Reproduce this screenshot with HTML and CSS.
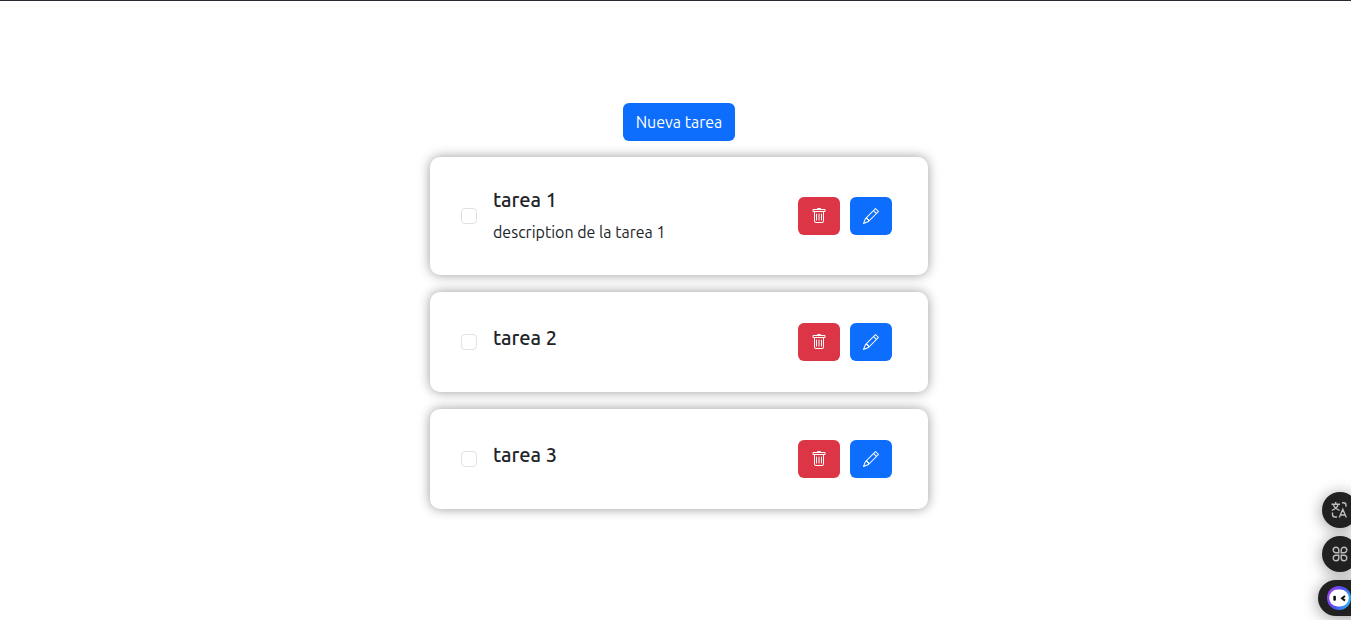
FILE: index.html
```html
<!DOCTYPE html>
<html lang="es">
<head>
<meta charset="utf-8">
<meta name="viewport" content="width=device-width, initial-scale=1">
<title>Tareas</title>
<link rel="stylesheet" href="styles.css">
</head>
<body>
<svg class="sprite" aria-hidden="true">
  <symbol id="trash" viewBox="0 0 16 16"><path d="M5.5 5.5A.5.5 0 0 1 6 6v6a.5.5 0 0 1-1 0V6a.5.5 0 0 1 .5-.5m2.500 0a.5.5 0 0 1 .5.5v6a.5.5 0 0 1-1 0V6a.5.5 0 0 1 .5-.5m3 .5a.5.5 0 0 0-1 0v6a.5.5 0 0 0 1 0z"/><path d="M14.500 3a1 1 0 0 1-1 1H13v9a2 2 0 0 1-2 2H5a2 2 0 0 1-2-2V4h-.5a1 1 0 0 1-1-1V2a1 1 0 0 1 1-1H6a1 1 0 0 1 1-1h2a1 1 0 0 1 1 1h3.500a1 1 0 0 1 1 1zM4.118 4 4 4.059V13a1 1 0 0 0 1 1h6a1 1 0 0 0 1-1V4.059L11.882 4zM2.500 3h11V2h-11z"/></symbol>
  <symbol id="pencil" viewBox="0 0 16 16"><path d="M12.146.146a.5.5 0 0 1 .708 0l3 3a.5.5 0 0 1 0 .708l-10 10a.5.5 0 0 1-.168.110l-5 2a.5.5 0 0 1-.650-.650l2-5a.5.5 0 0 1 .110-.168zM11.207 2.500 13.500 4.793 14.793 3.500 12.500 1.207zm1.586 3L10.500 3.207 4 9.707V10h.5a.5.5 0 0 1 .5.5v.5h.5a.5.5 0 0 1 .5.5v.5h.293zm-9.761 5.175-.106.106-1.528 3.821 3.821-1.528.106-.106A.5.5 0 0 1 5 12.500V12h-.5a.5.5 0 0 1-.5-.5V11h-.5a.5.5 0 0 1-.468-.325"/></symbol>
</svg>
<main class="page">
  <button class="btn btn-primary" type="button">Nueva tarea</button>
  <ul class="tasks">
    <li class="task">
      <input class="check" type="checkbox" id="t1">
      <label class="info" for="t1"><span class="title">tarea 1</span><span class="description">description de la tarea 1</span></label>
      <div class="actions">
        <button class="btn btn-danger" type="button" aria-label="Eliminar tarea 1"><svg class="icon"><use href="#trash"/></svg></button>
        <button class="btn btn-primary" type="button" aria-label="Editar tarea 1"><svg class="icon"><use href="#pencil"/></svg></button>
      </div>
    </li>
    <li class="task">
      <input class="check" type="checkbox" id="t2">
      <label class="info" for="t2"><span class="title">tarea 2</span></label>
      <div class="actions">
        <button class="btn btn-danger" type="button" aria-label="Eliminar tarea 2"><svg class="icon"><use href="#trash"/></svg></button>
        <button class="btn btn-primary" type="button" aria-label="Editar tarea 2"><svg class="icon"><use href="#pencil"/></svg></button>
      </div>
    </li>
    <li class="task">
      <input class="check" type="checkbox" id="t3">
      <label class="info" for="t3"><span class="title">tarea 3</span></label>
      <div class="actions">
        <button class="btn btn-danger" type="button" aria-label="Eliminar tarea 3"><svg class="icon"><use href="#trash"/></svg></button>
        <button class="btn btn-primary" type="button" aria-label="Editar tarea 3"><svg class="icon"><use href="#pencil"/></svg></button>
      </div>
    </li>
  </ul>
</main>
<aside class="dock">
  <button class="dock-btn" type="button" aria-label="Traducir">
    <svg class="dock-icon" viewBox="0 0 18 18"><path d="M0.500 3.200h8.500M4.700 1v2.200M2.200 3.400C3 6 5 8.200 8.600 9.300M7.300 3.400C6.500 6 4.500 8.200 0.800 9.300M11 1.800h1.500q2.500 0 2.500 2.500V5.800M1.500 11.500v2q0 2.500 2.500 2.500h2M8.300 16.500l3.500-8.200 3.500 8.200M9.500 14h4.600"/></svg>
  </button>
  <button class="dock-btn" type="button" aria-label="Aplicaciones">
    <svg class="dock-icon" viewBox="-1 -1 18 18"><path d="M4 1.200a2.800 2.800 0 0 0 0 5.600h2.800V4A2.800 2.800 0 0 0 4 1.200zM12 1.200a2.800 2.800 0 0 1 0 5.600H9.200V4A2.800 2.800 0 0 1 12 1.200zM4 14.800a2.800 2.800 0 0 1 0-5.600h2.800V12A2.800 2.800 0 0 1 4 14.800zM12 14.800a2.800 2.800 0 0 0 0-5.600H9.200V12a2.800 2.800 0 0 0 2.800 2.800z"/></svg>
  </button>
  <button class="dock-btn dock-main" type="button" aria-label="Asistente">
    <svg class="bot" viewBox="0 0 24 24">
      <defs><linearGradient id="ring" x1="0" y1="0.300" x2="1" y2="0.700"><stop offset="0" stop-color="#a040f5"/><stop offset="0.500" stop-color="#4b50f0"/><stop offset="1" stop-color="#2cb8f5"/></linearGradient></defs>
      <circle cx="12" cy="12" r="12" fill="url(#ring)"/>
      <rect x="2.200" y="3.600" width="19.600" height="16.800" rx="8.400" fill="#fff"/>
      <rect x="6.300" y="9.800" width="2.600" height="5" rx="1" fill="#111"/>
      <path d="M18 10l-3 2.300 3 2.300" fill="none" stroke="#111" stroke-width="2"/>
    </svg>
  </button>
</aside>
</body>
</html>
```

FILE: styles.css
```css
* { box-sizing: border-box; }

body {
  margin: 0;
  border-top: 1px solid #2b2a33;
  background: #fff;
  color: #212529;
  font: 16px/24px Ubuntu, "Noto Sans", sans-serif;
}

.sprite { display: none; }

.page {
  display: flex;
  flex-direction: column;
  align-items: center;
  gap: 16px;
  padding: 102px 12px 24px 19px;
}

.btn {
  min-height: 38px;
  padding: 6px 12px;
  border: 1px solid transparent;
  border-radius: 6px;
  color: #fff;
  font: inherit;
  cursor: pointer;
}

.btn-primary { background: #0d6efd; }
.btn-danger { background: #dc3545; }

.tasks {
  display: flex;
  flex-direction: column;
  gap: 17px;
  width: 100%;
  max-width: 498px;
  margin: 0;
  padding: 0;
  list-style: none;
}

.task {
  display: flex;
  align-items: center;
  gap: 16px;
  padding: 31px 36px 31px 31px;
  border-radius: 10px;
  background: #fff;
  box-shadow: 0 0 12px rgba(0, 0, 0, 0.4);
}

.check {
  appearance: none;
  flex: none;
  width: 16px;
  height: 16px;
  margin: 0;
  border: 1px solid #dee2e6;
  border-radius: 4px;
  background: #fff;
}

.check:checked { background: #0d6efd; }

.info {
  display: flex;
  flex: 1;
  flex-direction: column;
}

.title {
  margin-bottom: 8px;
  font-size: 20px;
  font-weight: 500;
}

.actions {
  display: flex;
  gap: 10px;
}

.actions .btn { width: 42px; }

.icon {
  display: block;
  width: 16px;
  height: 16px;
  fill: currentColor;
}

.dock {
  position: fixed;
  right: -7px;
  bottom: 4px;
  display: flex;
  flex-direction: column;
  align-items: flex-end;
  gap: 8px;
}

.dock-btn {
  display: flex;
  align-items: center;
  justify-content: center;
  width: 36px;
  height: 36px;
  padding: 0;
  border: 0;
  border-radius: 18px;
  background: #212121;
  color: #bdbdbd;
  box-shadow: 0 2px 16px rgba(0, 0, 0, 0.4);
}

.dock-icon {
  width: 18px;
  height: 18px;
  fill: none;
  stroke: currentColor;
  stroke-width: 1.4px;
}

.dock-main {
  justify-content: flex-start;
  width: 60px;
  margin-right: -20px;
  padding-left: 9px;
}

.bot {
  width: 24px;
  height: 24px;
}
```
